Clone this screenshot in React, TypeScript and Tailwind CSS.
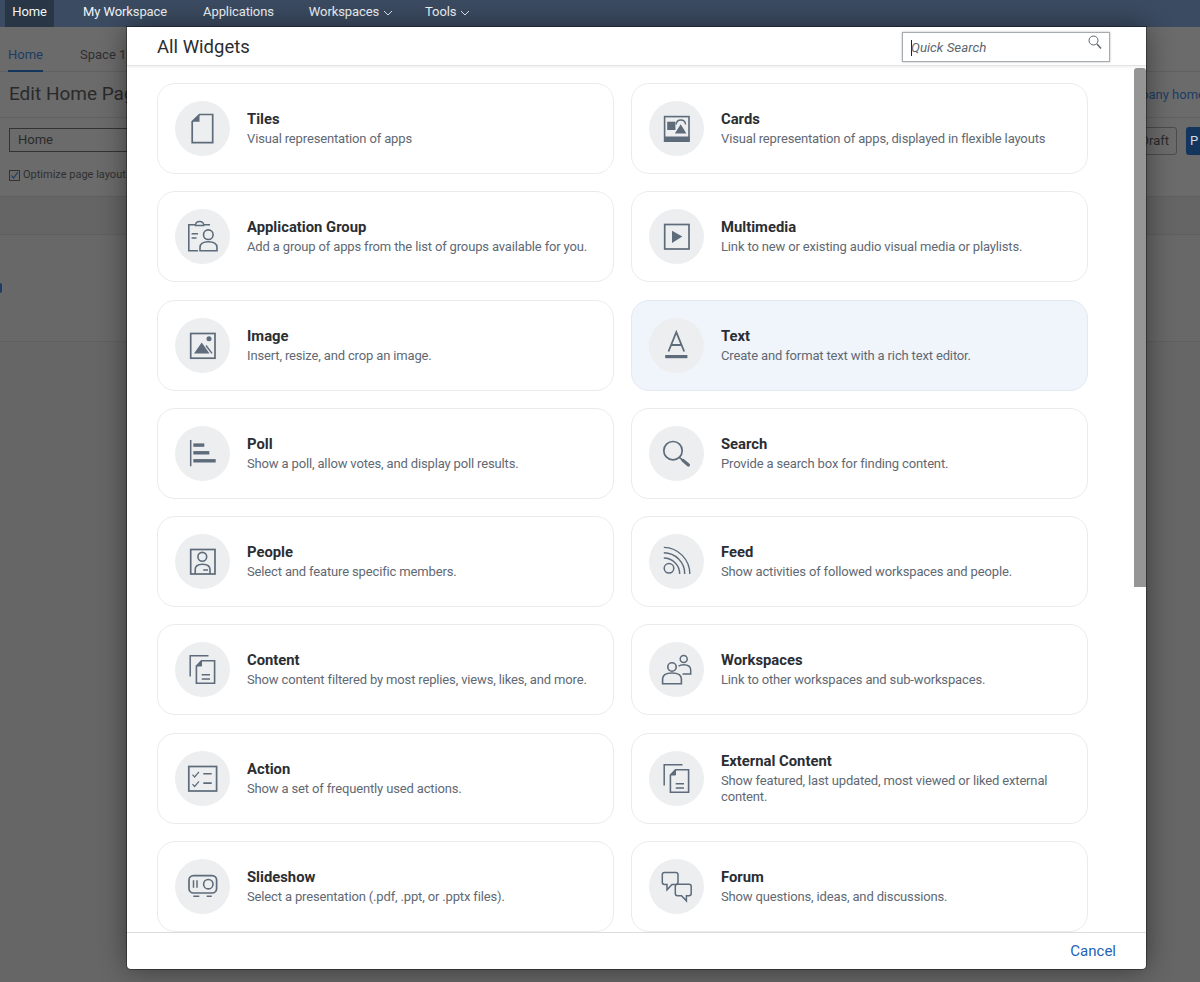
import React from "react";

const S = "#5d6b7a";

function Doc({ dy = 0 }: { dy?: number }) {
  return (
    <g transform={`translate(0 ${dy})`}>
      <path d="M15.2 34.5V13.8H33.5" fill="none" stroke={S} strokeWidth="1.5" />
      <path d="M26.5 18.8H39.6V41.2H21.4V24Z" fill="none" stroke={S} strokeWidth="1.6" />
      <path d="M21.5 24L26.5 18.8V24Z" fill={S} stroke={S} strokeWidth="1" />
      <path d="M26.7 32.7H35M26.7 37H35" fill="none" stroke={S} strokeWidth="1.5" />
    </g>
  );
}

const icons: Record<string, React.ReactNode> = {
  tiles: (
    <>
      <path d="M24.5 13.5H37.7V41.7H17.2V20.7Z" fill="none" stroke={S} strokeWidth="1.7" />
      <path d="M24.5 13.5L17.2 20.7H24.5Z" fill={S} />
    </>
  ),
  cards: (
    <>
      <rect x="15.6" y="15.6" width="24.4" height="24.6" fill="none" stroke={S} strokeWidth="1.6" />
      <rect x="15" y="35.5" width="25.6" height="5.2" fill={S} />
      <rect x="18.2" y="20.7" width="8.2" height="8.3" fill={S} />
      <path d="M31.7 23.3L37.4 32.4H25.9Z" fill={S} />
      <path d="M27.2 23.5C27.6 17.5 36 17.5 36.6 23.5" fill="none" stroke={S} strokeWidth="1.3" />
    </>
  ),
  group: (
    <>
      <path d="M35 15.7H29M20 15.7H13.8V41.8H23" fill="none" stroke={S} strokeWidth="1.6" />
      <path d="M20.5 16.5C20.5 11.2 28.7 11.2 28.7 16.5Z" fill="none" stroke={S} strokeWidth="1.4" />
      <path d="M16.6 24.7H23M16.6 29H21.5" fill="none" stroke={S} strokeWidth="1.4" />
      <circle cx="33.3" cy="25.7" r="4.8" fill="none" stroke={S} strokeWidth="1.6" />
      <path d="M25 41.8V38.5C25 34.5 28 32.7 33.3 32.7C38.6 32.7 42 34.5 42 38.5V41.8Z" fill="none" stroke={S} strokeWidth="1.6" />
    </>
  ),
  media: (
    <>
      <rect x="15.7" y="15.5" width="24.3" height="24.5" fill="none" stroke={S} strokeWidth="1.7" />
      <path d="M23 21.7L33.3 27.6L23 34Z" fill={S} />
    </>
  ),
  image: (
    <>
      <rect x="15.7" y="15.5" width="24.3" height="24.7" fill="none" stroke={S} strokeWidth="1.7" />
      <path d="M26.7 24.5L34.5 35.4H19Z" fill={S} />
      <circle cx="34" cy="20.8" r="2.5" fill={S} />
      <path d="M31 27.5L37 35.4" fill="none" stroke={S} strokeWidth="1.4" />
    </>
  ),
  text: (
    <>
      <path d="M19.5 33.5L27.3 14.2L35.2 33.5M22 27H32.7" fill="none" stroke={S} strokeWidth="1.8" />
      <rect x="16.2" y="37" width="22.2" height="3.2" fill={S} />
    </>
  ),
  poll: (
    <>
      <path d="M15.7 14V40.3" fill="none" stroke={S} strokeWidth="1.5" />
      <rect x="18.3" y="17.4" width="11" height="3.4" fill={S} />
      <rect x="18.3" y="25.1" width="16" height="3.4" fill={S} />
      <rect x="18.3" y="33.1" width="22.4" height="3.4" fill={S} />
    </>
  ),
  search: (
    <>
      <circle cx="24" cy="24.7" r="9.2" fill="none" stroke={S} strokeWidth="1.7" />
      <path d="M30.5 31.6L34 34.4" fill="none" stroke={S} strokeWidth="1.7" />
      <path d="M34 34.4L39.4 39" fill="none" stroke={S} strokeWidth="3.2" strokeLinecap="round" />
    </>
  ),
  people: (
    <>
      <rect x="15.7" y="15.5" width="24.3" height="24.5" fill="none" stroke={S} strokeWidth="1.7" />
      <circle cx="27.3" cy="22.8" r="4.4" fill="none" stroke={S} strokeWidth="1.6" />
      <path d="M20.2 40V35.5C20.2 31.5 24 30.2 27.5 30.2C31 30.2 35 31.5 35 35.5V40" fill="none" stroke={S} strokeWidth="1.6" />
      <path d="M28.2 36H33" fill="none" stroke={S} strokeWidth="1.5" />
    </>
  ),
  feed: (
    <>
      <circle cx="20" cy="34.3" r="4.8" fill="none" stroke={S} strokeWidth="1.5" />
      <path d="M14.8 24A16 16 0 0 1 30.7 40M14.8 18.8A21 21 0 0 1 35.7 40M14.8 13.4A26.5 26.5 0 0 1 40.8 40" fill="none" stroke={S} strokeWidth="1.4" />
    </>
  ),
  content: <Doc />,
  external: <Doc />,
  workspaces: (
    <>
      <circle cx="23" cy="25" r="4.2" fill="none" stroke={S} strokeWidth="1.6" />
      <path d="M13.6 41.7V37C13.6 33 17.5 31 23 31C28.5 31 32.4 33 32.4 37V41.7Z" fill="none" stroke={S} strokeWidth="1.6" />
      <circle cx="34.7" cy="17" r="3.5" fill="none" stroke={S} strokeWidth="1.5" />
      <path d="M29.5 24.3C31 23 32.8 22.7 34.7 22.7C38.6 22.7 41.7 24.5 41.7 28V32H33.5" fill="none" stroke={S} strokeWidth="1.5" />
    </>
  ),
  action: (
    <>
      <rect x="13.8" y="15.5" width="27.8" height="24.5" fill="none" stroke={S} strokeWidth="1.7" />
      <path d="M17.5 23.7L19.6 26L24 20.8M17.5 33.2L19.6 35.5L24 30.3" fill="none" stroke={S} strokeWidth="1.2" />
      <path d="M28.3 22.8H36.7M28.3 32.1H36.7" fill="none" stroke={S} strokeWidth="1.6" />
    </>
  ),
  forum: (
    <>
      <path d="M15.5 13.5H26.8C28.2 13.5 29 14.3 29 15.7V23.2C29 24.6 28.2 25.4 26.8 25.4H23L18 30.8V25.4H15.5C14.1 25.4 13.3 24.6 13.3 23.2V15.7C13.3 14.3 14.1 13.5 15.5 13.5Z" fill="none" stroke={S} strokeWidth="1.5" />
      <path d="M28.5 25.2H40C41.4 25.2 42.2 26 42.2 27.4V34.5C42.2 35.9 41.4 36.7 40 36.7H37.4V41.8L32.5 36.7H28.5C27.1 36.7 26.3 35.9 26.3 34.5V27.4C26.3 26 27.1 25.2 28.5 25.2Z" fill="none" stroke={S} strokeWidth="1.5" />
    </>
  ),
  slideshow: (
    <>
      <rect x="14" y="16.6" width="27.6" height="17.4" rx="4.5" fill="none" stroke={S} strokeWidth="1.7" />
      <path d="M18.5 21.3V28.7M22 21.3V28.7" fill="none" stroke={S} strokeWidth="1.5" />
      <circle cx="33.3" cy="25.2" r="4.7" fill="none" stroke={S} strokeWidth="1.6" />
      <path d="M18.3 37.3H24.3M31.7 37.3H36.7" fill="none" stroke={S} strokeWidth="1.5" />
    </>
  ),
};

const widgets = [
  ["tiles", "Tiles", "Visual representation of apps"],
  ["cards", "Cards", "Visual representation of apps, displayed in flexible layouts"],
  ["group", "Application Group", "Add a group of apps from the list of groups available for you."],
  ["media", "Multimedia", "Link to new or existing audio visual media or playlists."],
  ["image", "Image", "Insert, resize, and crop an image."],
  ["text", "Text", "Create and format text with a rich text editor."],
  ["poll", "Poll", "Show a poll, allow votes, and display poll results."],
  ["search", "Search", "Provide a search box for finding content."],
  ["people", "People", "Select and feature specific members."],
  ["feed", "Feed", "Show activities of followed workspaces and people."],
  ["content", "Content", "Show content filtered by most replies, views, likes, and more."],
  ["workspaces", "Workspaces", "Link to other workspaces and sub-workspaces."],
  ["action", "Action", "Show a set of frequently used actions."],
  ["external", "External Content", "Show featured, last updated, most viewed or liked external content."],
  ["slideshow", "Slideshow", "Select a presentation (.pdf, .ppt, or .pptx files)."],
  ["forum", "Forum", "Show questions, ideas, and discussions."],
];

function Chevron() {
  return (
    <svg width="10" height="6" viewBox="0 0 10 6" className="ml-[4px] mt-[3px]">
      <path d="M1 1L5 5L9 1" fill="none" stroke="#e8edf3" strokeWidth="1" />
    </svg>
  );
}

export default function App() {
  return (
    <div className="relative h-[982px] w-[1200px] overflow-hidden bg-[#666666] font-['Roboto',sans-serif]">
      <nav className="flex h-[27px] items-center bg-[#3b4b61] pb-[4px] pl-[5px] text-[13px] tracking-[-0.1px] text-[#f2f5f8]">
        <span className="mt-[4px] flex h-[27px] w-[49px] items-center justify-center bg-[#283645] pb-[4px]">Home</span>
        <span className="ml-[29px]">My Workspace</span>
        <span className="ml-[36px]">Applications</span>
        <span className="ml-[35px] flex items-center">Workspaces<Chevron /></span>
        <span className="ml-[32px] flex items-center">Tools<Chevron /></span>
      </nav>

      <div className="h-[170px] border-b border-[#5f5f5f] bg-[#6b6b6b]">
        <div className="flex h-[45px] border-b border-[#616161] pl-[8px] text-[13px] text-[#2f2f2f]">
          <span className="flex h-[45px] items-center border-b-2 border-[#14365c] pt-[12px] text-[#1c3d63]">Home</span>
          <span className="ml-[37px] flex items-center pt-[12px]">Space 1</span>
        </div>
        <div className="flex h-[46px] items-center justify-between border-b border-[#616161] pl-[9px] text-[19px] text-[#2a2a2a]">
          <span>Edit Home Page</span>
          <span className="mr-[-5px] text-[13px] text-[#1c3d63]">Company home</span>
        </div>
        <div className="flex justify-between pt-[9px]">
          <div className="ml-[9px] mt-[1px] flex h-[24px] w-[150px] items-center border border-[#333333] pl-[8px] text-[13px] text-[#2a2a2a]">Home</div>
          <div className="flex items-center gap-[9px]">
            <span className="flex h-[28px] items-center rounded-[3px] border border-[#4c4c4c] px-[7px] text-[13px] text-[#2a2a2a]">Draft</span>
            <span className="flex h-[28px] w-[14px] items-center rounded-l-[3px] bg-[#14365c] pl-[4px] text-[13px] text-[#d4dae0]">P</span>
          </div>
        </div>
        <div className="ml-[9px] mt-[12px] flex items-center gap-[3px] text-[11px] text-[#303030]">
          <svg width="11" height="11" viewBox="0 0 11 11">
            <rect x="0.5" y="0.5" width="10" height="10" fill="none" stroke="#333" />
            <path d="M2.5 5.5L4.5 8L9 2" fill="none" stroke="#1c3d63" strokeWidth="1.2" />
          </svg>
          Optimize page layout
        </div>
      </div>
      <div className="h-[38px] border-b border-[#5f5f5f] bg-[#656565]" />
      <div className="h-[107px] border-b border-[#5f5f5f] bg-[#686868] pt-[48px]">
        <div className="h-[10px] w-[2px] rounded-r-full bg-[#1c3d63]" />
      </div>

      <div className="absolute left-[127px] top-[27px] flex h-[942px] w-[1019px] flex-col overflow-hidden rounded-b-[4px] bg-white shadow-[0_0_0_1px_rgba(0,0,0,0.35),0_0_28px_rgba(0,0,0,0.45)]">
        <header className="z-10 flex h-[39px] shrink-0 items-center justify-between border-b border-[#e1e3e5] pl-[30px] pr-[36px] shadow-[0_1px_3px_rgba(0,0,0,0.08)]">
          <h1 className="pt-[3px] text-[18.5px] font-normal text-[#2a2d30]">All Widgets</h1>
          <div className="relative mt-[1px] flex h-[30px] w-[208px] items-center border border-[#a6abb0] pl-[8px] pt-[2px] text-[13.3px] italic text-[#5c6670] shadow-[0_0_2px_rgba(0,0,0,0.3)]">
            <span className="mr-[-1px] h-[16px] w-px bg-[#222]" />
            Quick Search
            <svg width="14" height="15" viewBox="0 0 14 15" className="absolute right-[7px] top-[2px]">
              <circle cx="5.5" cy="5.5" r="4.5" fill="none" stroke="#5b6670" strokeWidth="1" />
              <path d="M9 9L13 13.5" fill="none" stroke="#5b6670" strokeWidth="1.5" />
            </svg>
          </div>
        </header>

        <div className="relative min-h-0 flex-1 overflow-hidden pl-[30px] pt-[17px]">
          <div className="grid w-[931px] grid-cols-2 gap-x-[17px] gap-y-[17.3px]">
            {widgets.map(([key, title, desc]) => (
              <div
                key={key}
                className={`flex h-[91px] items-center rounded-[18px] border pl-[17px] pr-[24px] ${key === "text" ? "border-[#e3e9f1] bg-[#f0f5fc]" : "border-[#ebebeb] bg-white"}`}
              >
                <svg width="55" height="55" viewBox="0 0 55 55" className="shrink-0 rounded-full bg-[#eceef0]">
                  {icons[key]}
                </svg>
                <div className="ml-[17px] min-w-0">
                  <div className="text-[14.8px] font-bold leading-[18px] text-[#2a2e33]">{title}</div>
                  <div className="mt-[3px] text-[13px] leading-[16px] tracking-[-0.15px] text-[#5f6973]">{desc}</div>
                </div>
              </div>
            ))}
          </div>
          <div className="absolute right-0 top-[2px] h-[519px] w-[12px] rounded-t-[3px] bg-[#959595]" />
        </div>

        <footer className="flex h-[37px] shrink-0 items-center justify-end border-t border-[#dcdcdc] pr-[30px] text-[15px] text-[#2463b4]">
          Cancel
        </footer>
      </div>
    </div>
  );
}
